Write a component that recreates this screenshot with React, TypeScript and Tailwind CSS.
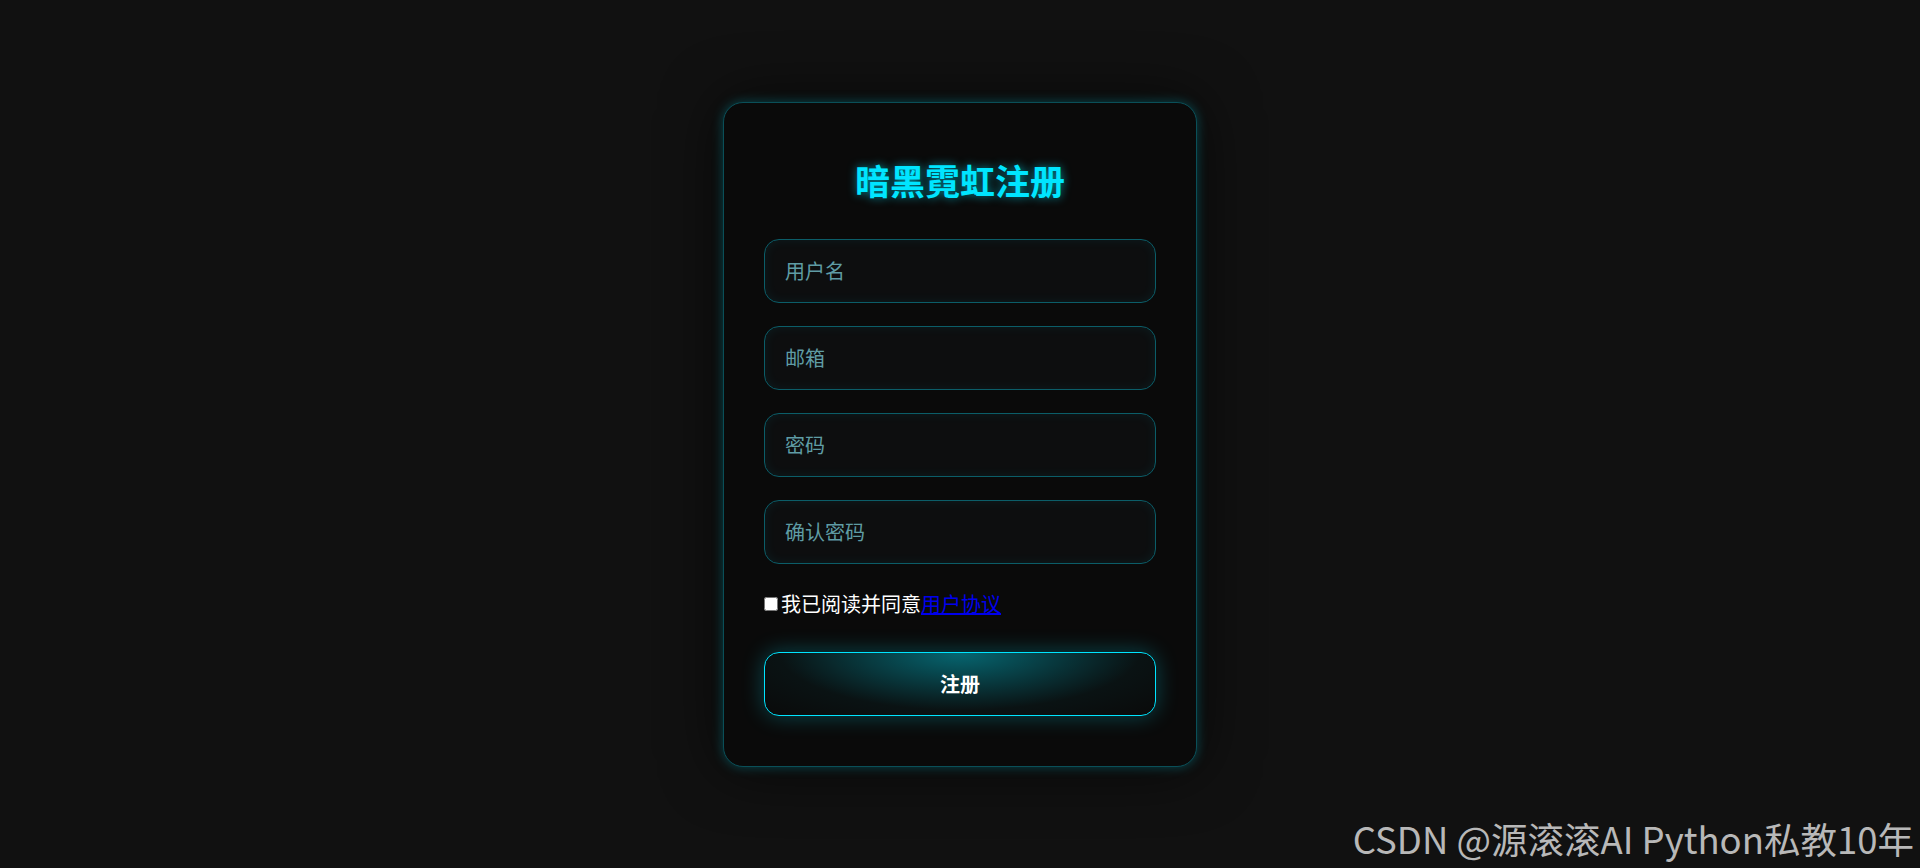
const fields = ["用户名", "邮箱", "密码", "确认密码"];

export default function App() {
  return (
    <div
      className="relative flex h-screen items-center justify-center bg-[#111111]"
      style={{ fontFamily: '"Noto Sans CJK SC", "Noto Sans", sans-serif' }}
    >
      <div className="w-[474px] rounded-[20px] border border-[#0a4f58] bg-[#0a0a0a] px-10 pt-[49px] pb-[50px] shadow-[0_0_12px_rgba(0,229,255,0.28),0_0_60px_rgba(0,0,0,0.7)]">
        <h2 className="mb-[31px] text-center text-[35px] leading-[56px] font-bold text-[#00e5ff] [text-shadow:0_0_10px_rgba(0,229,255,0.6)]">
          暗黑霓虹注册
        </h2>

        <div className="flex flex-col gap-[23px]">
          {fields.map((f) => (
            <input
              key={f}
              type={f.includes("密码") ? "password" : "text"}
              placeholder={f}
              className="h-16 w-full rounded-[15px] border border-[#0b5d68] bg-[#0d0e0f] px-5 text-[20px] text-white shadow-[inset_0_0_12px_rgba(0,229,255,0.07)] outline-none placeholder:text-[#5f9ca4]"
            />
          ))}
        </div>

        <label className="mt-[26px] flex h-7 items-center text-[20px] leading-7 text-white">
          <input type="checkbox" className="m-0 mr-[3px] h-[14px] w-[14px]" />
          我已阅读并同意
          <a href="#" className="text-[#0000ee] underline">
            用户协议
          </a>
        </label>

        <button className="mt-[34px] h-16 w-full rounded-[15px] border border-[#00e5ff] bg-[radial-gradient(ellipse_at_top,rgba(0,229,255,0.42),rgba(0,229,255,0.04)_65%,transparent)] text-[20px] font-bold text-white shadow-[0_0_22px_rgba(0,229,255,0.28)]">
          注册
        </button>
      </div>

      <div className="absolute right-[6px] bottom-[5px] text-[36.5px] leading-[48px] text-[#b8b8b8]">
        CSDN @源滚滚AI Python私教10年
      </div>
    </div>
  );
}
